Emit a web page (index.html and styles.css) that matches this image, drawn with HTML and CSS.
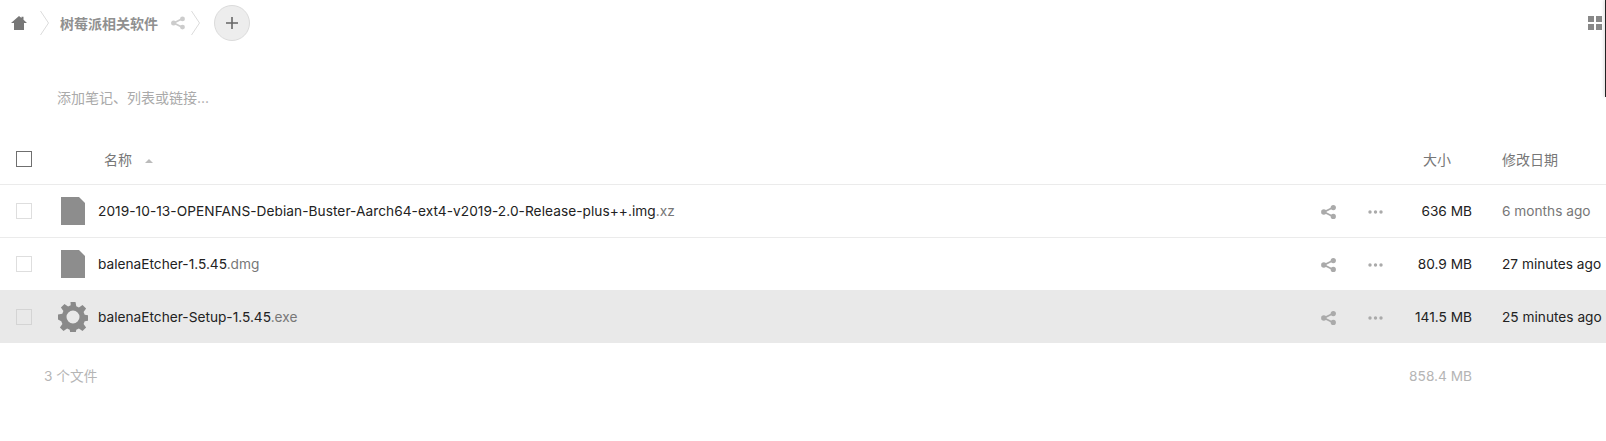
FILE: index.html
```html
<!DOCTYPE html>
<html lang="zh">
<head>
<meta charset="utf-8">
<title>树莓派相关软件</title>
<link rel="stylesheet" href="styles.css">
</head>
<body>
<svg class="defs" aria-hidden="true">
  <symbol id="share-icon" viewBox="0 0 15 14">
    <path class="share-line" d="M12 2.500 L3 7 L12 11.500"/>
    <circle cx="2.800" cy="7" r="2.700"/><circle cx="12.300" cy="2.600" r="2.600"/><circle cx="12.300" cy="11.400" r="2.600"/>
  </symbol>
</svg>
<div class="app">
  <header class="toolbar">
    <svg class="home" viewBox="0 0 16 14"><path d="M8 0 L10.500 2.100 V.8 H12.500 V3.800 L16 7 H13 V14 H3 V7 H0 Z"/></svg>
    <svg class="crumb-sep" viewBox="0 0 9 24"><path d="M.5 0 L8.500 12 L.5 24"/></svg>
    <span class="crumb">树莓派相关软件</span>
    <svg class="share crumb-share"><use href="#share-icon"/></svg>
    <svg class="crumb-sep sep2" viewBox="0 0 9 24"><path d="M.5 0 L8.500 12 L.5 24"/></svg>
    <button class="add"><svg viewBox="0 0 12 12"><path d="M6 0V12M0 6H12"/></svg></button>
    <svg class="grid-icon" viewBox="0 0 14 14"><path d="M0 0h6v6H0zM8 0h6v6H8zM0 8h6v6H0zM8 8h6v6H8z"/></svg>
  </header>
  <div class="edge"></div>
  <div class="note">添加笔记、列表或链接...</div>
  <div class="table">
    <div class="row head">
      <span class="check strong"></span>
      <span class="name-head">名称<i class="sort"></i></span>
      <span class="size">大小</span>
      <span class="date">修改日期</span>
    </div>
    <div class="row">
      <span class="check"></span>
      <span class="thumb"><svg class="doc" viewBox="0 0 24 28"><path d="M0 0H18L24 6V28H0Z"/></svg></span>
      <span class="name long-name">2019-10-13-OPENFANS-Debian-Buster-Aarch64-ext4-v2019-2.0-Release-plus++.img<em>.xz</em></span>
      <svg class="share"><use href="#share-icon"/></svg>
      <svg class="more" viewBox="0 0 15 4"><circle cx="2" cy="2" r="1.700"/><circle cx="7.500" cy="2" r="1.700"/><circle cx="13" cy="2" r="1.700"/></svg>
      <span class="size">636 MB</span>
      <span class="date muted">6 months ago</span>
    </div>
    <div class="row before-selected">
      <span class="check"></span>
      <span class="thumb"><svg class="doc" viewBox="0 0 24 28"><path d="M0 0H18L24 6V28H0Z"/></svg></span>
      <span class="name">balenaEtcher-1.5.45<em>.dmg</em></span>
      <svg class="share"><use href="#share-icon"/></svg>
      <svg class="more" viewBox="0 0 15 4"><circle cx="2" cy="2" r="1.700"/><circle cx="7.500" cy="2" r="1.700"/><circle cx="13" cy="2" r="1.700"/></svg>
      <span class="size">80.9 MB</span>
      <span class="date">27 minutes ago</span>
    </div>
    <div class="row selected">
      <span class="check"></span>
      <span class="thumb"><svg class="gear" viewBox="0 0 30 30"><path fill-rule="evenodd" d="M12.500 0h5l.8 4.300 2.600 1.100 3.600-2.500 3.600 3.600-2.500 3.600 1.100 2.600 4.300.8v5l-4.300.8-1.100 2.600 2.500 3.600-3.600 3.600-3.600-2.500-2.600 1.100-.8 4.300h-5l-.8-4.300-2.600-1.100-3.600 2.500-3.600-3.600 2.500-3.600-1.100-2.600L0 17.500v-5l4.300-.8 1.100-2.600-2.500-3.600 3.600-3.600 3.600 2.500 2.600-1.100ZM15 8.500a6.500 6.500 0 1 0 0 13 6.500 6.500 0 0 0 0-13Z"/></svg></span>
      <span class="name">balenaEtcher-Setup-1.5.45<em>.exe</em></span>
      <svg class="share"><use href="#share-icon"/></svg>
      <svg class="more" viewBox="0 0 15 4"><circle cx="2" cy="2" r="1.700"/><circle cx="7.500" cy="2" r="1.700"/><circle cx="13" cy="2" r="1.700"/></svg>
      <span class="size">141.5 MB</span>
      <span class="date">25 minutes ago</span>
    </div>
    <div class="summary">
      <span class="count">3 个文件</span>
      <span class="total">858.4 MB</span>
    </div>
  </div>
</div>
</body>
</html>
```
FILE: styles.css
```css
* { box-sizing: border-box; }
html, body { margin: 0; height: 100%; overflow: hidden; background: #fff; }
body { font-family: Inter, "Noto Sans CJK SC", sans-serif; font-size: 14px; color: #222; }
.defs { display: none; }
.app { position: relative; height: 441px; }

.toolbar { display: flex; align-items: center; height: 45px; padding-left: 11px; }
.home { flex: none; width: 16px; height: 14px; fill: #777; }
.crumb-sep { flex: none; width: 9px; height: 24px; margin-left: 13px; fill: none; stroke: #dcdcdc; }
.crumb { margin-left: 11px; font-weight: 700; color: #909090; font-family: "Noto Sans CJK SC", sans-serif; }
.sep2 { margin-left: 6px; }
.add { flex: none; width: 36px; height: 36px; margin-left: 14px; padding: 0; display: flex; align-items: center; justify-content: center; border-radius: 50%; background: #ededed; border: 1px solid #dbdbdb; }
.add svg { width: 12px; height: 12px; fill: none; stroke: #666; stroke-width: 1.6; }
.grid-icon { flex: none; width: 14px; height: 14px; margin-left: auto; margin-right: 4px; fill: #888; }

.edge { position: absolute; right: 0; top: 0; width: 1px; height: 97px; background: #222; box-shadow: -1px 0 3px rgba(0,0,0,.25); }

.note { height: 88px; padding: 43px 0 0 57px; color: #aaa; line-height: 20px; }

.row { display: flex; align-items: center; height: 53px; border-bottom: 1px solid #ebebeb; font-size: 13.7px; }
.head { height: 52px; color: #777; font-size: 14px; }
.row.before-selected { height: 52px; border-bottom: 0; }
.row.selected { background: #e9e9e9; border-bottom: 0; }
.check { flex: none; width: 16px; height: 16px; margin-left: 16px; border: 1px solid #dedede; background: #fff; }
.row.selected .check { background: #e9e9e9; border-color: #d4d4d4; }
.check.strong { border-color: #6f6f6f; }
.thumb { flex: none; width: 50px; height: 30px; margin-left: 16px; display: flex; align-items: center; justify-content: center; }
.doc { width: 24px; height: 28px; fill: #8d8d8d; }
.gear { width: 30px; height: 30px; fill: #8a8a8a; }
.name-head { flex: 1; margin-left: 72px; color: #777; }
.sort { display: inline-block; margin-left: 13px; vertical-align: 2px; border-left: 4px solid transparent; border-right: 4px solid transparent; border-bottom: 4px solid #bbb; }
.name { flex: 1; }
.long-name { letter-spacing: .05px; }
.name em { font-style: normal; color: #777; }
.share { flex: none; width: 15px; height: 14px; margin-top: 2px; color: #aaa; fill: currentColor; }
.share-line { fill: none; stroke: currentColor; stroke-width: 1.8; }
.crumb-share { width: 14px; margin: 0 0 0 13px; color: #ccc; }
.more { flex: none; width: 15px; height: 4px; margin-left: 32px; margin-top: 2px; fill: #aaa; }
.size { flex: none; width: 89px; text-align: right; }
.head .size { width: 79px; margin-right: 21px; }
.date { flex: none; width: 104px; margin-left: 30px; white-space: nowrap; }
.head .date { margin-left: 30px; }
.muted { color: #777; }

.summary { display: flex; justify-content: space-between; padding: 23px 134px 0 44px; color: #b5b5b5; line-height: 20px; font-size: 13.7px; }
```
